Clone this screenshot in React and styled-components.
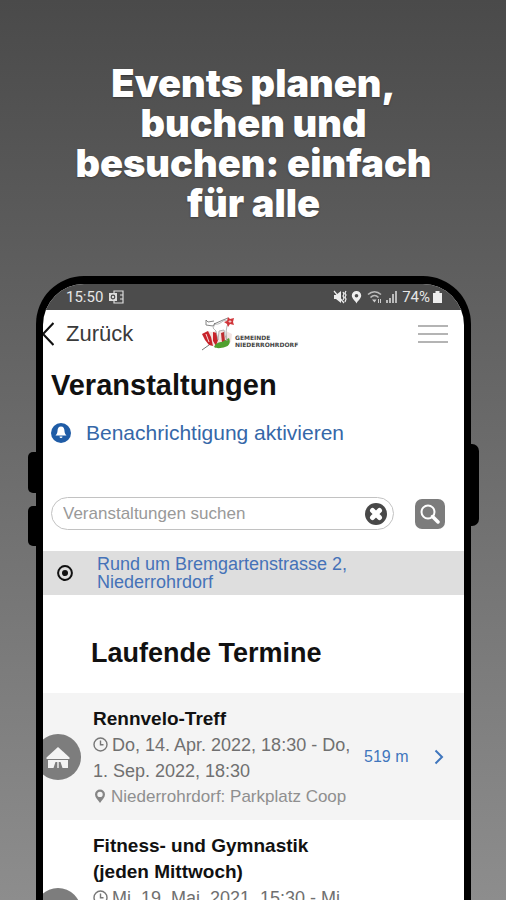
import React from "react";
import styled, { createGlobalStyle } from "styled-components";

const GlobalStyle = createGlobalStyle`
  *, *::before, *::after { box-sizing: border-box; }
  body { margin: 0; font-family: "Liberation Sans", Arial, sans-serif; color: #111; }
  h1, h2, h3, p, ul { margin: 0; padding: 0; }
  button, input { font: inherit; }
  svg { display: block; }
`;

const Page = styled.main`
  height: 100vh;
  overflow: hidden;
  display: flex;
  flex-direction: column;
  padding: 0 35px 0 36px;
  background: linear-gradient(#4a4a4a, #8d8d8d);
`;

const Headline = styled.h1`
  flex: none;
  max-width: 380px;
  margin: 63px auto 53px;
  font: 900 38px/40px Inter, "Liberation Sans", sans-serif;
  text-align: center;
  color: #fff;
  text-shadow: 0 1px 2px rgba(0, 0, 0, 0.35);
`;

const Phone = styled.section`
  position: relative;
  flex: 1;
  min-height: 0;
  border: 7px solid #000;
  border-top-width: 8px;
  border-bottom: 0;
  border-radius: 48px 48px 0 0;
  background: #000;
`;

const SideKey = styled.span`
  position: absolute;
  top: ${(p) => p.$top}px;
  ${(p) => p.$side}: -15px;
  width: 10px;
  height: ${(p) => p.$length}px;
  border-radius: ${(p) => (p.$side === "left" ? "5px 0 0 5px" : "0 7px 7px 0")};
  background: #000;
`;

const Screen = styled.div`
  height: 100%;
  overflow: hidden;
  border-radius: 41px 41px 0 0;
  background: #fff;
`;

const StatusBar = styled.div`
  display: flex;
  align-items: center;
  justify-content: space-between;
  height: 26px;
  padding: 0 22px 0 23px;
  background: #4c4c4c;
  color: #e6e6e6;
  font: 15px/18px Roboto, sans-serif;
`;

const StatusGroup = styled.div`
  display: flex;
  align-items: center;
  gap: ${(p) => p.$gap}px;
`;

const AppBar = styled.header`
  display: flex;
  align-items: center;
  justify-content: space-between;
  height: 48px;
  padding-right: 16px;
`;

const BackButton = styled.button`
  display: flex;
  align-items: center;
  gap: 12px;
  padding: 0;
  border: 0;
  background: none;
  color: #3a3a3a;
  font-size: 22px;
  line-height: 28px;
`;

const Brand = styled.a`
  display: flex;
  align-items: center;
  margin-right: 52px;
  color: #444;
  text-decoration: none;
  font: 700 6px/7px "DejaVu Sans", sans-serif;
`;

const BrandName = styled.span`
  padding-top: 13px;
`;

const MenuButton = styled.button`
  display: grid;
  gap: 6px;
  width: 30px;
  padding: 0;
  border: 0;
  background: none;
`;

const MenuLine = styled.span`
  height: 2px;
  background: #b4b4b4;
`;

const Title = styled.h2`
  padding: 11px 8px 20px;
  font-size: 29px;
  line-height: 32px;
`;

const NotifyButton = styled.button`
  display: flex;
  align-items: center;
  gap: 15px;
  padding: 0 8px;
  border: 0;
  background: none;
  color: #3567a8;
  font-size: 21px;
  line-height: 24px;
`;

const SearchForm = styled.form`
  display: flex;
  align-items: center;
  gap: 21px;
  padding: 52px 19px 21px 8px;
`;

const SearchField = styled.label`
  display: flex;
  flex: 1;
  align-items: center;
  height: 33px;
  padding: 0 6px 0 11px;
  border: 1px solid #c2c2c2;
  border-radius: 17px;
`;

const SearchInput = styled.input`
  flex: 1;
  min-width: 0;
  padding: 0;
  border: 0;
  outline: 0;
  background: none;
  font-size: 17px;
  line-height: 24px;
  &::placeholder { color: #999; opacity: 1; }
`;

const ClearButton = styled.button`
  padding: 0;
  border: 0;
  background: none;
`;

const SearchButton = styled.button`
  display: grid;
  place-items: center;
  width: 30px;
  height: 30px;
  padding: 0;
  border: 0;
  border-radius: 7px;
  background: #7c7c7c;
`;

const Location = styled.a`
  display: flex;
  align-items: center;
  gap: 24px;
  padding: 4px 90px 4px 14px;
  background: #dedede;
  color: #4572b8;
  text-decoration: none;
  font-size: 18px;
  line-height: 18px;
  svg { flex: none; }
`;

const SectionTitle = styled.h2`
  padding: 42px 48px 24px;
  font-size: 27px;
  line-height: 32px;
`;

const EventList = styled.ul`
  list-style: none;
`;

const EventRow = styled.li`
  display: flex;
  align-items: center;
  min-height: ${(p) => (p.$tall ? 182 : 127)}px;
  background: ${(p) => (p.$shaded ? "#f4f4f4" : "#fff")};
`;

const Category = styled.span`
  flex: none;
  display: grid;
  place-items: center;
  width: 46px;
  height: 46px;
  margin: 0 12px 0 -8px;
  border-radius: 50%;
  background: #7d7d7d;
`;

const EventText = styled.div`
  flex: 1;
  align-self: flex-start;
  padding: 13px 0 10px;
  line-height: 26px;
`;

const EventName = styled.h3`
  max-width: 260px;
  font-size: 19px;
  line-height: 26px;
`;

const EventDate = styled.p`
  color: #707070;
  font-size: 18px;
`;

const EventPlace = styled.p`
  color: #8f8f8f;
  font-size: 17px;
`;

const InlineIcon = styled.svg`
  && { display: inline-block; }
  margin-right: 4px;
  vertical-align: -1px;
`;

const Distance = styled.a`
  display: flex;
  flex: none;
  align-items: center;
  justify-content: space-between;
  width: 110px;
  padding: 1px 20px 0 10px;
  color: #3f76bd;
  text-decoration: none;
  font-size: 16px;
  line-height: 20px;
`;

function Clock() {
  return (
    <InlineIcon width="15" height="15" viewBox="0 0 15 15" fill="none" stroke="#777" strokeWidth="1.4" aria-hidden="true">
      <circle cx="7.5" cy="7.5" r="6.5" />
      <path d="M7.5 3.5v4.3h3" />
    </InlineIcon>
  );
}

function Pin() {
  return (
    <InlineIcon width="14" height="14" viewBox="0 0 14 14" aria-hidden="true">
      <path fillRule="evenodd" fill="#858585" d="M7 .5a5 5 0 0 1 5 5C12 8.500 9 11 7 14 5 11 2 8.500 2 5.500A5 5 0 0 1 7 .5Zm0 2.200a2.700 2.700 0 1 0 0 5.400 2.700 2.700 0 0 0 0-5.400Z" />
    </InlineIcon>
  );
}

function House() {
  return (
    <svg width="24" height="24" viewBox="0 0 24 24" fill="#f4f4f4" aria-hidden="true">
      <path d="M12 2 23.500 12.500V14H.5v-1.500Z" />
      <path d="M2 15h20v8h-5.500l-2-6h-1.800v6h-1.400v-6H9.500l-2 6H2Z" />
    </svg>
  );
}

function Crest() {
  return (
    <svg width="34" height="36" viewBox="0 0 34 36" aria-hidden="true">
      <path d="M1 18l5-3 5 1 7-2 7 1 6 3-1 8-7 5-8 1-7-4Z" fill="#f3e4e2" />
      <path d="M1 18l6-3 3 6 2 9-4-1-4-5Z" fill="#c8232a" />
      <path d="M5 18l3 8" stroke="#f6dada" strokeWidth="1" />
      <path d="M12 16l4 1 1 7-2 6-3-5Z" fill="#c8232a" />
      <path d="M20 17l3-1 1 9-3 2Z" fill="#bd2c30" />
      <path d="M13 31c2-4 5-5 8-5l7-4c2 5 0 8-4 9-3 1-8 2-11 0Z" fill="#4fa02f" />
      <path d="M14 8c4 1 6-2 10-4l4 2-2 4-1 6 1 9-2-6-1-5-5 1-1 9-2-9-3-3Z" fill="#fff" stroke="#999" strokeWidth=".7" />
      <path d="M5 4l2 2 6-1M5 4v5l7 1 2-3M13 8l9-4 5-2" fill="none" stroke="#777" strokeWidth=".9" />
      <path d="M27 1l2 2 4-1-1 4 1 3-4-1-2 3-1-3-3-2 3-1Z" fill="#d0363a" />
      <path d="M29 4v3M27.500 5.500h3" stroke="#fff" strokeWidth=".6" />
      <path d="M1 34l7-5" stroke="#777" strokeWidth="1" />
    </svg>
  );
}

export default function App() {
  return (
    <>
      <GlobalStyle />
      <Page>
        <Headline>Events planen, buchen und besuchen: einfach für alle</Headline>
        <Phone>
          <SideKey $side="left" $top={168} $length={41} />
          <SideKey $side="left" $top={222} $length={40} />
          <SideKey $side="right" $top={160} $length={82} />
          <Screen>
            <StatusBar>
              <StatusGroup $gap={6}>
                <span>15:50</span>
                <svg width="15" height="14" viewBox="0 0 15 14" fill="none" stroke="#ddd" strokeWidth="1.200" aria-hidden="true">
                  <path d="M5 3V1h9v12H5v-2M11 5h3M11 9h3" />
                  <path d="M0 3h8v8H0z" fill="#ddd" stroke="none" />
                  <circle cx="4" cy="7" r="1.800" stroke="#4c4c4c" />
                </svg>
              </StatusGroup>
              <StatusGroup $gap={3}>
                <svg width="66" height="14" viewBox="0 0 66 14" fill="#eee" aria-hidden="true">
                  <path d="M1 5h2l5-4v12l-5-4H1Z" />
                  <path d="M1 1l10 12M10 2l1 2-1 2 1 2-1 2M13 1l-1 2 1 2-1 2 1 2-1 3" fill="none" stroke="#eee" strokeWidth="1.200" />
                  <path fillRule="evenodd" d="M23.500 1A4.700 4.700 0 0 1 28.200 5.600c0 3-3.200 5-4.700 7.900-1.500-2.900-4.700-4.900-4.700-7.900A4.700 4.700 0 0 1 23.500 1Zm0 2.900a1.800 1.800 0 1 0 0 3.600 1.800 1.800 0 0 0 0-3.600Z" />
                  <path d="M35 4.500c4-3.500 9-3.500 13 0M37.500 7.500c2.500-2.500 5.500-2.500 8 0" fill="none" stroke="#bbb" strokeWidth="1.600" />
                  <path d="M39 9.500h4.500L41.500 12.500ZM45 9h1v4h-1zM47 9h1v4h-1z" fill="#ccc" />
                  <path d="M53 10h2v3h-2zM56 8h2v5h-2zM59 4h2v9h-2zM62 1h2v12h-2z" fill="#bbb" />
                </svg>
                <span>74%</span>
                <svg width="9" height="12" viewBox="0 0 9 12" fill="#eee" aria-hidden="true">
                  <path d="M2.500 0h4v2H9v10H0V2h2.500Z" />
                </svg>
              </StatusGroup>
            </StatusBar>
            <AppBar>
              <BackButton type="button">
                <svg width="11" height="24" viewBox="0 0 11 24" fill="none" stroke="#111" strokeWidth="2.200" aria-hidden="true">
                  <path d="M10.500 1 0 12l10.500 11" />
                </svg>
                Zurück
              </BackButton>
              <Brand href="#start">
                <Crest />
                <BrandName>GEMEINDE<br />NIEDERROHRDORF</BrandName>
              </Brand>
              <MenuButton type="button" aria-label="Menü">
                <MenuLine /><MenuLine /><MenuLine />
              </MenuButton>
            </AppBar>
            <Title>Veranstaltungen</Title>
            <NotifyButton type="button">
              <svg width="20" height="20" viewBox="0 0 20 20" aria-hidden="true">
                <circle cx="10" cy="10" r="10" fill="#1f5ca6" />
                <path d="M10 3.500c2.500 0 3.400 2 3.500 4.500.1 2 .7 3 2 4.500h-11c1.300-1.500 1.900-2.500 2-4.500.1-2.500 1-4.500 3.500-4.500ZM8.500 13.500h3a1.500 1.500 0 0 1-3 0Z" fill="#fff" />
              </svg>
              Benachrichtigung aktivieren
            </NotifyButton>
            <SearchForm onSubmit={(e) => e.preventDefault()}>
              <SearchField>
                <SearchInput type="text" placeholder="Veranstaltungen suchen" aria-label="Veranstaltungen suchen" />
                <ClearButton type="reset" aria-label="Löschen">
                  <svg width="22" height="22" viewBox="0 0 22 22">
                    <circle cx="11" cy="11" r="11" fill="#484848" />
                    <path d="M7.500 7.500l7 7M14.500 7.500l-7 7" stroke="#fff" strokeWidth="5" strokeLinecap="round" />
                  </svg>
                </ClearButton>
              </SearchField>
              <SearchButton type="submit" aria-label="Suchen">
                <svg width="20" height="20" viewBox="0 0 20 20" fill="none" stroke="#fff">
                  <circle cx="8" cy="8" r="6.500" strokeWidth="2" />
                  <path d="M12.500 12.500 18 18" strokeWidth="3.500" strokeLinecap="round" />
                </svg>
              </SearchButton>
            </SearchForm>
            <Location href="#ort">
              <svg width="16" height="16" viewBox="0 0 16 16" aria-hidden="true">
                <circle cx="8" cy="8" r="6.900" fill="none" stroke="#111" strokeWidth="2" />
                <circle cx="8" cy="8" r="3" fill="#111" />
              </svg>
              Rund um Bremgartenstrasse 2, Niederrohrdorf
            </Location>
            <SectionTitle>Laufende Termine</SectionTitle>
            <EventList>
              <EventRow $shaded>
                <Category><House /></Category>
                <EventText>
                  <EventName>Rennvelo-Treff</EventName>
                  <EventDate><Clock />Do, 14. Apr. 2022, 18:30 - Do, 1. Sep. 2022, 18:30</EventDate>
                  <EventPlace><Pin />Niederrohrdorf: Parkplatz Coop</EventPlace>
                </EventText>
                <Distance href="#rennvelo-treff">
                  519 m
                  <svg width="10" height="16" viewBox="0 0 10 16" fill="none" stroke="#3f76bd" strokeWidth="2" aria-hidden="true">
                    <path d="M1.500 1.500 8 8l-6.500 6.500" />
                  </svg>
                </Distance>
              </EventRow>
              <EventRow $tall>
                <Category />
                <EventText>
                  <EventName>Fitness- und Gymnastik (jeden Mittwoch)</EventName>
                  <EventDate><Clock />Mi, 19. Mai. 2021, 15:30 - Mi,</EventDate>
                </EventText>
              </EventRow>
            </EventList>
          </Screen>
        </Phone>
      </Page>
    </>
  );
}
